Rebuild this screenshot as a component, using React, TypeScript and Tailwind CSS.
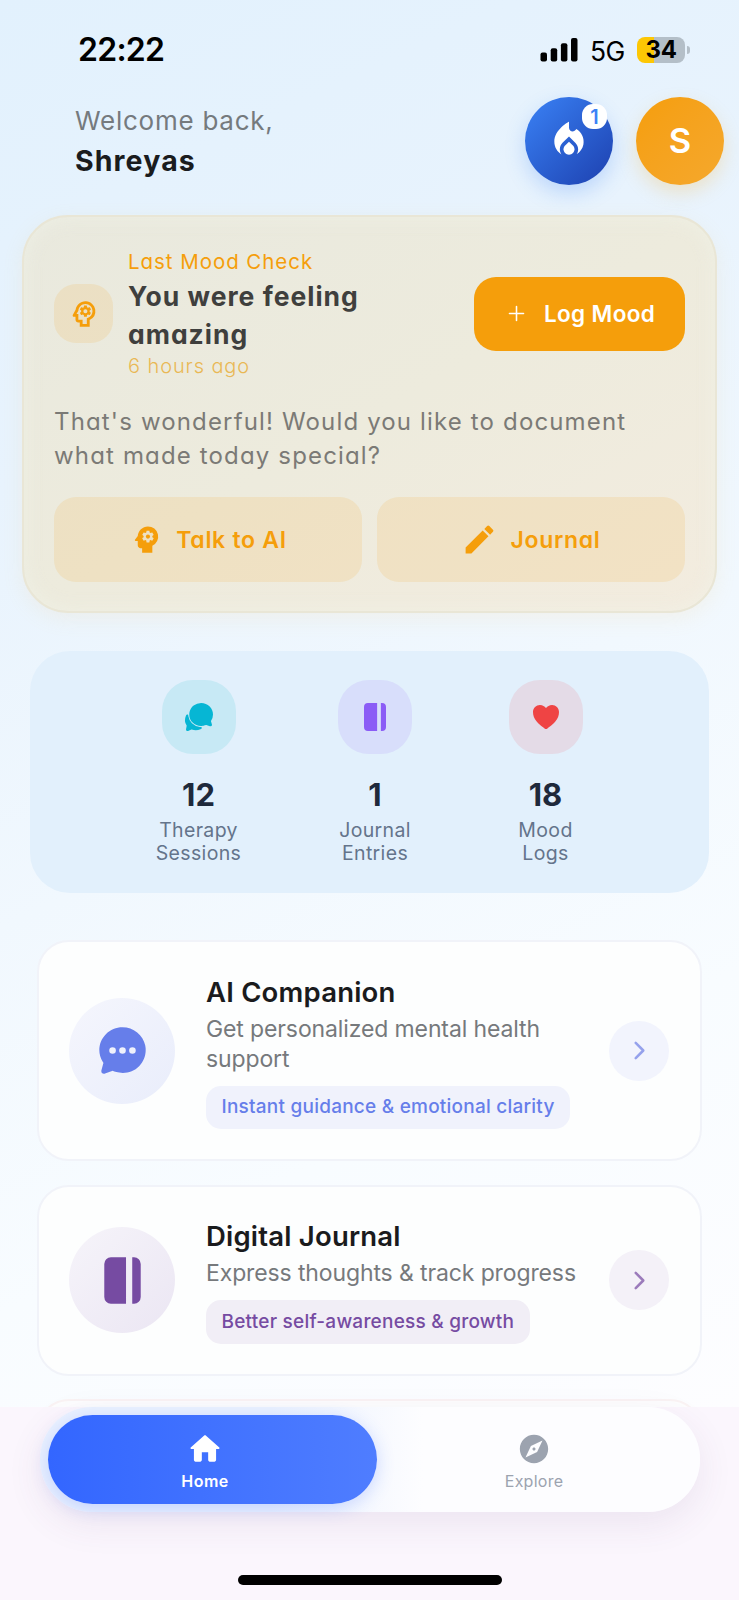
import type { ReactNode } from "react";
import {
  MdEdit,
  MdExplore,
  MdLocalFireDepartment,
  MdOutlinePsychology,
  MdPsychology,
} from "react-icons/md";
import {
  IoAdd,
  IoChatbubbleEllipses,
  IoChatbubbles,
  IoChevronForward,
  IoHeart,
  IoJournal,
} from "react-icons/io5";

function StatusBar() {
  return (
    <div className="flex h-[97px] items-center justify-between pr-[49px] pl-[78px] pt-[2px] text-black">
      <span className="text-[32px] font-semibold leading-10 tracking-[-0.75px]">22:22</span>
      <div className="flex items-center">
        <svg width="38" height="24" viewBox="0 0 38 24" aria-hidden="true">
          <rect x="0.5" y="14.5" width="6.5" height="9" rx="2" />
          <rect x="10.7" y="10.3" width="6.5" height="13.2" rx="2" />
          <rect x="20.9" y="5.3" width="6.5" height="18.2" rx="2" />
          <rect x="31" y="0" width="6.5" height="23.5" rx="2" />
        </svg>
        <span className="ml-[12px] w-[36px] pt-[2px] text-[26.5px] leading-8 tracking-[-0.6px]">5G</span>
        <div className="ml-[11px] flex h-[26px] w-[48px] items-center justify-center rounded-[8px] bg-[linear-gradient(90deg,#fdc704_35%,#b4bfc8_35%)] text-[24px] font-bold tracking-[-0.3px]">
          34
        </div>
        <div className="ml-[2px] h-[8px] w-[3px] rounded-r-full bg-[#b4bfc8]" />
      </div>
    </div>
  );
}

function Header() {
  return (
    <header className="flex h-[88px] items-center pr-[15px] pl-[75px]">
      <div className="flex-1">
        <p className="text-[26px] leading-10 tracking-[0.75px] text-[#757a7e]">Welcome back,</p>
        <p className="text-[28.5px] font-bold leading-10 tracking-[1.1px] text-[#1a1c1e]">Shreyas</p>
      </div>
      <button className="relative flex size-[88px] items-center justify-center rounded-full bg-linear-to-br from-[#3b82f6] to-[#1e40af] text-white shadow-[0_8px_20px_rgba(59,130,246,0.25)]">
        <MdLocalFireDepartment size={44} className="-mt-[2px]" />
        <span className="absolute top-[7px] right-[6px] flex size-[25px] items-center justify-center rounded-[11px] bg-white text-[20px] font-semibold text-[#3b82f6]">
          1
        </span>
      </button>
      <button className="ml-[23px] flex size-[88px] items-center justify-center rounded-full bg-linear-to-br from-[#f59e0b] to-[#f5a82c] text-[34.5px] font-semibold text-white shadow-[0_8px_18px_rgba(245,180,60,0.25)]">
        S
      </button>
    </header>
  );
}

function SoftButton({ icon, label }: { icon: ReactNode; label: string }) {
  return (
    <button className="flex h-[85px] flex-1 items-center justify-center gap-[12px] rounded-[22px] bg-[#f59e0b]/12 text-[23px] font-semibold tracking-[0.7px] text-[#f59e0b]">
      {icon}
      <span className="pt-[1px]">{label}</span>
    </button>
  );
}

function MoodCard() {
  return (
    <section className="mx-[22px] mt-[30px] h-[398px] rounded-[46px] border-2 border-[#e9e6d6] bg-linear-to-br from-[#e9e9de] via-[#edebdd] to-[#f3ecdf] px-[30px] pt-[30px] shadow-[0_6px_20px_rgba(245,200,110,0.12),inset_0_0_20px_rgba(240,243,234,0.6)] [font-feature-settings:'cv11']">
      <div className="flex items-center">
        <div className="flex size-[59px] shrink-0 items-center justify-center rounded-[22px] bg-[#f59e0b]/12 text-[#f59e0b]">
          <MdOutlinePsychology size={34} />
        </div>
        <div className="ml-[15px] w-[300px]">
          <p className="text-[20.5px] leading-[30px] tracking-[0.95px] text-[#f59e0b]">Last Mood Check</p>
          <p className="w-[290px] text-[26.5px] font-bold leading-[38px] tracking-[1px] text-[#3f3f3d]">
            You were feeling amazing
          </p>
          <p className="text-[20px] font-light leading-[27px] tracking-[0.9px] text-[#e9b855]">6 hours ago</p>
        </div>
        <button className="ml-auto flex h-[74px] w-[211px] items-center rounded-[22px] bg-[#f59e0b] pl-[30px] text-white">
          <IoAdd size={25} />
          <span className="ml-[15px] pt-[1px] text-[22.5px] font-semibold tracking-[0.35px]">Log Mood</span>
        </button>
      </div>
      <p className="mt-[25px] text-[24px] leading-[34px] tracking-[1.15px] whitespace-nowrap text-[#7b7a76]">
        That's wonderful! Would you like to document
        <br />
        what made today special?
      </p>
      <div className="mt-[24px] flex gap-[15px]">
        <SoftButton icon={<MdPsychology size={35} />} label="Talk to AI" />
        <SoftButton icon={<MdEdit size={37} />} label="Journal" />
      </div>
    </section>
  );
}

function Stat({ box, tile, icon, value, top, bottom }: {
  box: string; tile: string; icon: ReactNode; value: string; top: string; bottom: string;
}) {
  return (
    <div className={`flex flex-col items-center ${box}`}>
      <div className={`flex size-[74px] items-center justify-center rounded-[31px] ${tile}`}>{icon}</div>
      <p className="mt-[23px] text-[31px] font-bold leading-9 text-[#1e293b]">{value}</p>
      <p className="mt-[6px] text-center text-[19.5px] leading-[22.6px] tracking-[0.35px] text-[#64748b]">
        {top}
        <br />
        {bottom}
      </p>
    </div>
  );
}

function Stats() {
  return (
    <section className="mx-[30px] mt-[38px] flex h-[242px] rounded-[40px] bg-[#e2f0fc] pt-[29px] pl-[80px]">
      <Stat box="w-[177px]" tile="bg-[#c7e9f5] text-[#06b6d4]" icon={<IoChatbubbles size={32} />} value="12" top="Therapy" bottom="Sessions" />
      <Stat box="w-[176px]" tile="bg-[#d8defb] text-[#8b5cf6]" icon={<IoJournal size={32} />} value="1" top="Journal" bottom="Entries" />
      <Stat box="w-[165px]" tile="bg-[#e4dbe7] text-[#ef4444]" icon={<IoHeart size={32} />} value="18" top="Mood" bottom="Logs" />
    </section>
  );
}

function FeatureCard({ height, disc, arrow, chip, icon, title, lines, tag }: {
  height: string; disc: string; arrow: string; chip: string; icon: ReactNode; title: string; lines: string[]; tag: string;
}) {
  return (
    <section className={`flex shrink-0 items-center rounded-[32px] border-2 border-[#f1f3f9] bg-[#fdfefe] pr-[31px] pl-[30px] ${height}`}>
      <div className={`flex size-[106px] shrink-0 items-center justify-center rounded-full ${disc}`}>{icon}</div>
      <div className="ml-[31px] w-[402px] pt-[2px]">
        <h2 className="text-[27.5px] font-semibold leading-9 tracking-[0.2px] text-[#1a1b1d]">{title}</h2>
        <p className="mt-[4px] text-[23px] leading-[30px] tracking-[-0.12px] whitespace-nowrap text-[#76797c]">
          {lines.map((line) => (
            <span key={line} className="block">{line}</span>
          ))}
        </p>
        <span className={`mt-[12px] inline-flex h-[43.5px] items-center rounded-[15px] px-[15.5px] align-top text-[19px] font-medium tracking-[0.23px] whitespace-nowrap ${chip}`}>
          {tag}
        </span>
      </div>
      <div className={`ml-auto flex size-[60px] shrink-0 items-center justify-center rounded-full ${arrow}`}>
        <IoChevronForward size={27} />
      </div>
    </section>
  );
}

function TabBar() {
  return (
    <footer className="relative h-[193px] bg-[#fbf6fd]">
      <nav className="mx-[39.5px] flex h-[105px] rounded-[52px] bg-[linear-gradient(90deg,#eaf1fe_0%,#eaf1fe_35%,#fdfdff_58%)] p-[8px] shadow-[0_12px_36px_rgba(90,50,110,0.09)]">
        <button className="flex h-[89px] w-[329px] flex-col items-center rounded-[44.5px] bg-linear-to-r from-[#3366ff] to-[#4f7dff] pt-[15px] pr-[14px] text-white shadow-[0_4px_18px_rgba(51,102,255,0.22)]">
          <svg width="38" height="38" viewBox="0 0 24 24" fill="currentColor" aria-hidden="true">
            <path d="M10 19v-5h4v5c0 .55.45 1 1 1h3c.55 0 1-.45 1-1v-7h1.7c.46 0 .68-.57.33-.87L12.67 3.6c-.38-.34-.96-.34-1.34 0l-8.36 7.53c-.34.3-.13.87.33.87H5v7c0 .55.45 1 1 1h3c.55 0 1-.45 1-1z" />
          </svg>
          <span className="mt-[3px] text-[16px] font-semibold leading-5 tracking-[0.5px]">Home</span>
        </button>
        <button className="flex flex-1 flex-col items-center pt-[17px] text-[#9ca3af]">
          <MdExplore size={34} />
          <span className="mt-[5px] text-[16px] leading-5 tracking-[0.25px]">Explore</span>
        </button>
      </nav>
      <div className="mx-auto mt-[63px] h-[9.5px] w-[264px] rounded-full bg-black" />
    </footer>
  );
}

export default function App() {
  return (
    <div className="h-[1600px] w-[739px] overflow-hidden font-['Inter',sans-serif]">
      <main className="h-[1407px] overflow-hidden bg-[linear-gradient(155deg,#e2f1fd_0%,#e8f3fd_28%,#f1f8fe_53%,#f8fcff_75%,#fdfdff_100%)]">
        <StatusBar />
        <Header />
        <MoodCard />
        <Stats />
        <div className="mx-[37px] mt-[47px] flex flex-col gap-[23.5px]">
          <FeatureCard
            height="h-[221px]"
            disc="bg-linear-to-br from-[#f5f6fd] to-[#e9edfb] text-[#667eea]"
            arrow="bg-[#f2f4fd] text-[#95a1ec]"
            chip="bg-[#f0f2fc] text-[#667eea]"
            icon={<IoChatbubbleEllipses size={53} />}
            title="AI Companion"
            lines={["Get personalized mental health", "support"]}
            tag="Instant guidance & emotional clarity"
          />
          <FeatureCard
            height="h-[191px]"
            disc="bg-linear-to-br from-[#f6f4fa] to-[#ebe6f3] text-[#764ba2]"
            arrow="bg-[#f4f1f8] text-[#9b7bbb]"
            chip="bg-[#f1eef6] text-[#764ba2]"
            icon={<IoJournal size={53} />}
            title="Digital Journal"
            lines={["Express thoughts & track progress"]}
            tag="Better self-awareness & growth"
          />
          <section className="h-[191px] shrink-0 rounded-[32px] border-2 border-[#faf3f4] bg-[#fdfdfe]" />
        </div>
      </main>
      <TabBar />
    </div>
  );
}
